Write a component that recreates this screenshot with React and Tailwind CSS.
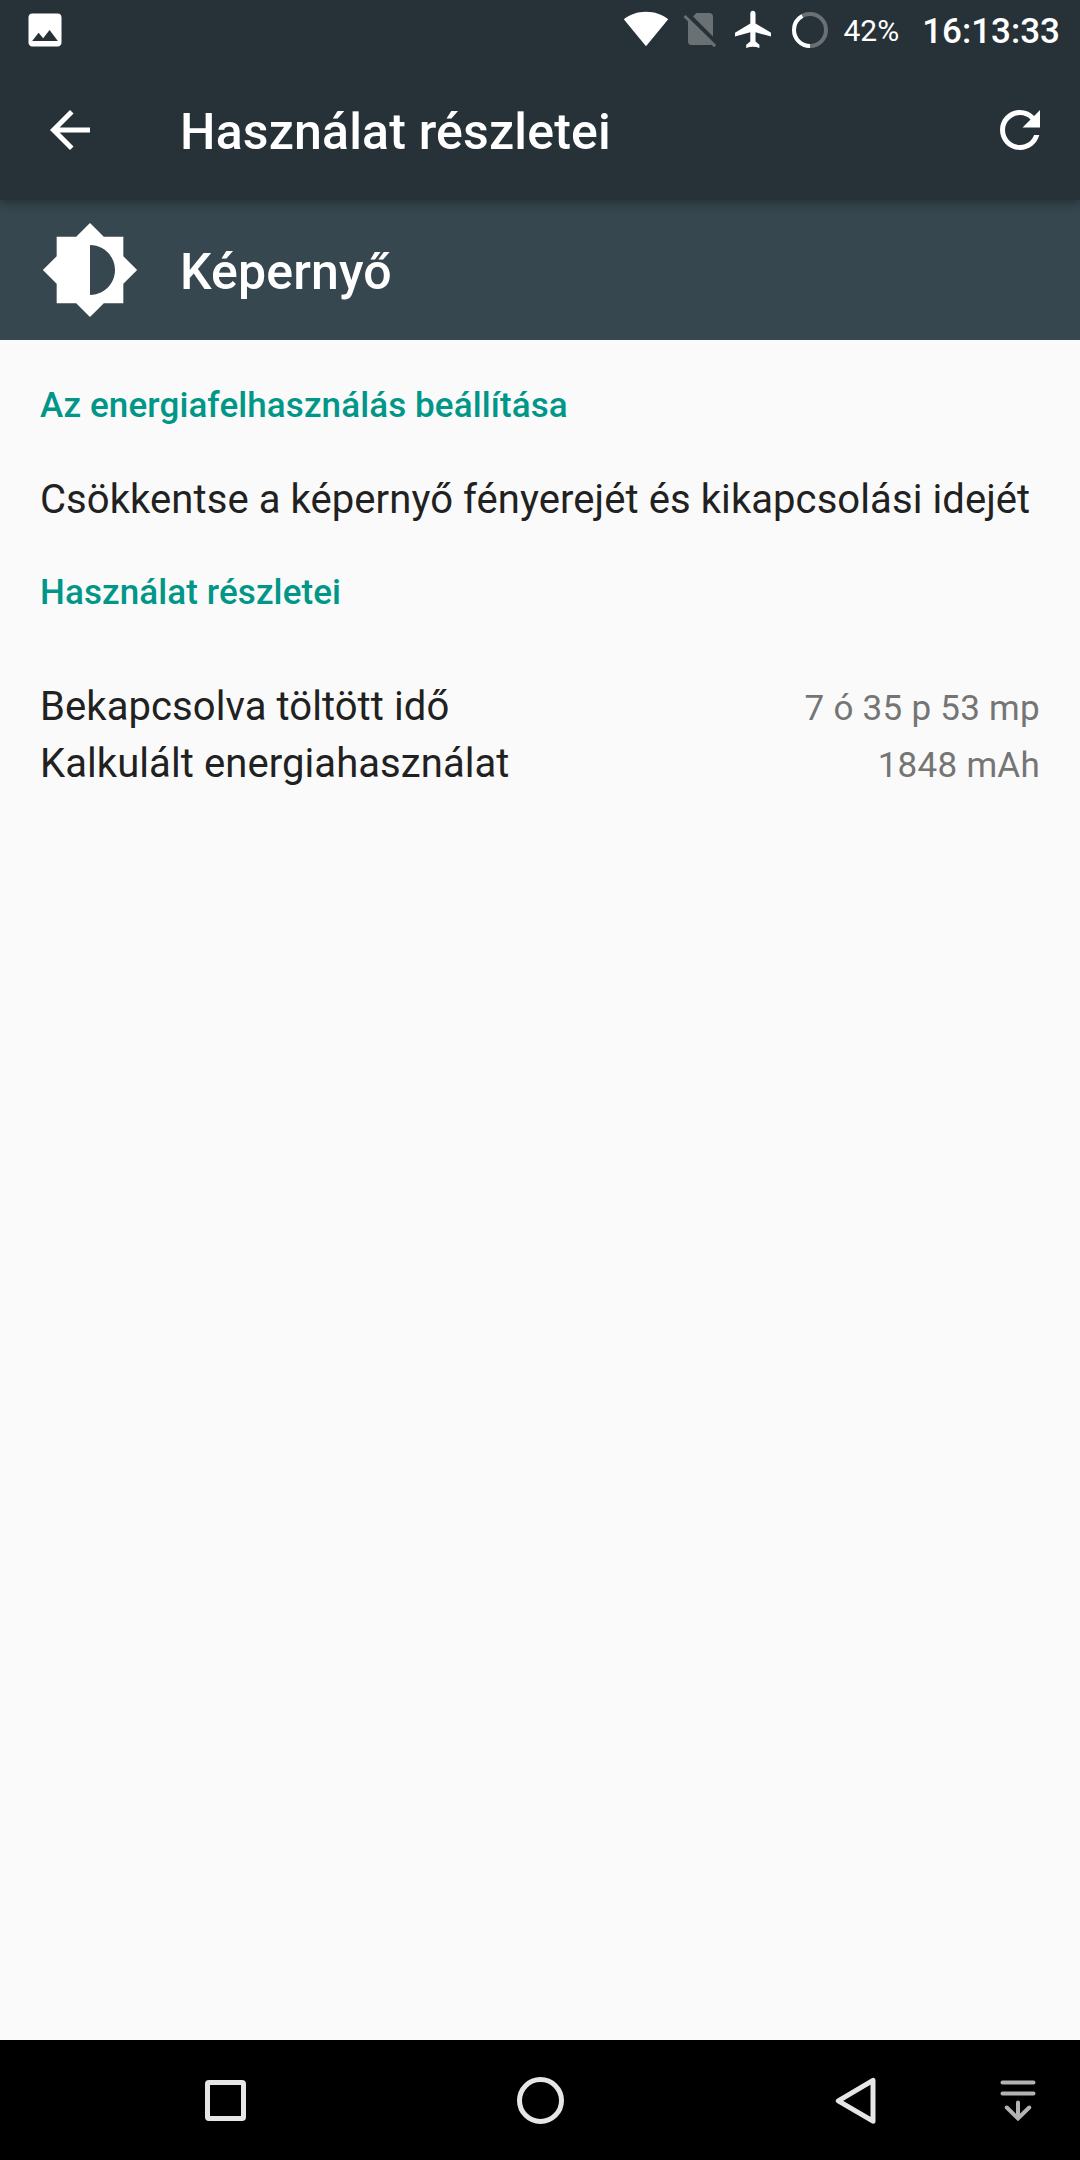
import React from 'react';

const usage = [
  { label: 'Bekapcsolva töltött idő', value: '7 ó 35 p 53 mp' },
  { label: 'Kalkulált energiahasználat', value: '1848 mAh' },
];

function StatusBar() {
  return (
    <div className="flex h-[60px] items-center pl-[23px] pr-5 text-white">
      <svg className="size-11" viewBox="0 0 24 24" fill="currentColor">
        <path d="M21 19V5c0-1.1-.9-2-2-2H5c-1.1 0-2 .9-2 2v14c0 1.1.9 2 2 2h14c1.1 0 2-.9 2-2zM8.5 13.5l2.5 3.01L14.5 12l4.5 6H5l3.5-4.5z" />
      </svg>

      <div className="ml-auto flex items-center">
        {/* Wi-Fi */}
        <svg className="h-[60px] w-[46px]" viewBox="0 0 46 60" fill="currentColor">
          <path d="M23 46.3L.8 19.2C7 14.4 14.5 11.7 23 11.7s16 2.7 22.2 7.5z" />
        </svg>
        {/* No SIM */}
        <svg className="ml-[13px] h-[60px] w-9 text-[#697175]" viewBox="0 0 36 60" fill="currentColor">
          <path d="M14.3 13H27a4 4 0 0 1 4 4v19.600L11 16.600z" />
          <path d="M6 19.500L30.800 44.300Q30 45 28.500 45H9.500Q6 45 6 41.500z" />
          <path d="M1.500 17L3.600 14.900L34.200 45L32.100 47.200z" />
        </svg>
        {/* Airplane mode */}
        <svg className="ml-[17px] h-[60px] w-9" viewBox="0 0 36 60" fill="currentColor">
          <path d="M36 36.600v-3.900L20.500 23.500V13.500c0-1.500-1.100-2.700-2.600-2.700s-2.600 1.200-2.600 2.700v10L0 32.700v3.900l15.300-4.300v9.300l-4.100 3.200v3.200c4.500-1.800 8.900-1.800 13.200 0v-3.200l-3.900-3.200v-9.300z" />
        </svg>
        {/* Battery ring, filled clockwise from the bottom */}
        <svg className="ml-[21px] size-9 rotate-90" viewBox="0 0 36 36" fill="none" strokeWidth="4">
          <circle cx="18" cy="18" r="16" stroke="#697175" />
          <circle cx="18" cy="18" r="16" stroke="#fff" pathLength="100" strokeDasharray="42 58" />
        </svg>
        <span className="ml-[15px] pt-px text-[30px] leading-none">42%</span>
        <span className="ml-[23px] pt-0.5 text-[35px] font-medium leading-none">16:13:33</span>
      </div>
    </div>
  );
}

function AppBar() {
  return (
    <div className="flex h-[140px] items-center pl-10 pr-[30px] text-white">
      <svg className="size-[60px]" viewBox="0 0 24 24" fill="currentColor">
        <path d="M20 11H7.83l5.59-5.59L12 4l-8 8 8 8 1.41-1.41L7.83 13H20v-2z" />
      </svg>
      <h1 className="ml-20 pt-1 text-[50px] font-medium leading-none tracking-[0.18px]">Használat részletei</h1>
      <svg className="ml-auto size-[60px]" viewBox="0 0 24 24" fill="currentColor">
        <path d="M17.65 6.35C16.2 4.9 14.21 4 12 4c-4.42 0-7.99 3.58-7.99 8s3.57 8 7.99 8c3.73 0 6.84-2.55 7.73-6h-2.08c-.82 2.33-3.04 4-5.65 4-3.31 0-6-2.69-6-6s2.69-6 6-6c1.66 0 3.14.69 4.22 1.78L13 11h7V4l-2.35 2.35z" />
      </svg>
    </div>
  );
}

function NavBar() {
  return (
    <nav className="flex h-[120px] items-center bg-black pl-[205px] pt-px text-[#e6e6e6]">
      <div className="size-[41px] rounded-[4px] border-5 border-current" />
      <div className="ml-[271px] size-[47px] rounded-full border-5 border-current" />
      <svg className="ml-[271px] h-12 w-[42px]" viewBox="0 0 42 48" fill="none" stroke="currentColor" strokeWidth="5" strokeLinejoin="round">
        <path d="M38 3.3V44.2L3.3 23.8z" />
      </svg>
      <svg className="ml-[123px] h-[42px] w-9 text-[#b3b3b3]" viewBox="0 0 36 42" fill="none" stroke="currentColor" strokeWidth="4" strokeLinecap="round">
        <path d="M2.5 2.5h31M2.5 13.5h31M18 22.5V38M6.8 27.5L18 38.5L29.2 27.5" />
      </svg>
    </nav>
  );
}

export default function App() {
  return (
    <div className="flex h-[2160px] w-[1080px] flex-col overflow-hidden bg-[#fafafa] font-['Roboto',sans-serif]">
      <header className="relative z-10 bg-[#263238] shadow-[0_3px_10px_rgba(0,0,0,0.35)]">
        <StatusBar />
        <AppBar />
      </header>

      <div className="flex h-[140px] items-center bg-[#37474f] pl-10 text-white">
        <svg className="size-[100px]" viewBox="0 0 24 24" fill="currentColor">
          <path d="M20 15.31L23.31 12 20 8.69V4h-4.69L12 .69 8.69 4H4v4.69L.69 12 4 15.31V20h4.69L12 23.31 15.31 20H20v-4.69zM12 18V6c3.31 0 6 2.69 6 6s-2.69 6-6 6z" />
        </svg>
        <h2 className="ml-10 pt-1 text-[50px] font-medium leading-none tracking-[0.15px]">Képernyő</h2>
      </div>

      <main className="flex-1 px-10 pt-[45px] text-[40px] tracking-[0.08px] text-[#212121]">
        <h3 className="text-[35px] font-medium leading-[41px] tracking-[0.1px] text-[#009688]">Az energiafelhasználás beállítása</h3>
        <p className="mt-[50px] whitespace-nowrap leading-[47px]">Csökkentse a képernyő fényerejét és kikapcsolási idejét</p>
        <h3 className="mt-[49px] text-[35px] font-medium leading-[41px] tracking-[0.1px] text-[#009688]">Használat részletei</h3>
        <div className="mt-[65px]">
          {usage.map((item) => (
            <div key={item.label} className="flex h-[57px] items-baseline justify-between leading-[57px]">
              <span>{item.label}</span>
              <span className="text-[35px] tracking-[0.27px] text-[#757575]">{item.value}</span>
            </div>
          ))}
        </div>
      </main>

      <NavBar />
    </div>
  );
}
